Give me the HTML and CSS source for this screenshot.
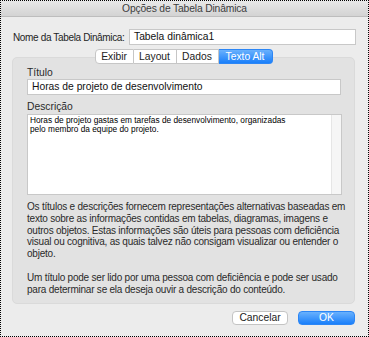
FILE: index.html
```html
<!DOCTYPE html>
<html>
<head>
  <meta http-equiv="Content-type" content="text/html; charset=utf-8">
  <title>Opções de Tabela Dinâmica</title>
  <link rel="stylesheet" href="styles.css">
</head>
<body>
<div class="win">
  <div class="titlebar">Opções de Tabela Dinâmica</div>

  <div class="namerow">
    <label class="namelbl">Nome da Tabela Dinâmica:</label>
    <div class="field namefield">Tabela dinâmica1</div>
  </div>

  <div class="tabs">
    <span class="tab t1">Exibir</span>
    <span class="tab t2">Layout</span>
    <span class="tab t3">Dados</span>
    <span class="tab t4 sel">Texto Alt</span>
  </div>

  <div class="group">
    <div class="lbl">Título</div>
    <div class="field titlefield">Horas de projeto de desenvolvimento</div>

    <div class="lbl lbl2">Descrição</div>
    <div class="area">
      <div class="areatext">Horas de projeto gastas em tarefas de desenvolvimento, organizadas<br>pelo membro da equipe do projeto.</div>
      <div class="scroll"></div>
    </div>

    <p class="info">Os títulos e descrições fornecem representações alternativas baseadas em<br>texto sobre as informações contidas em tabelas, diagramas, imagens e<br>outros objetos. Estas informações são úteis para pessoas com deficiência<br>visual ou cognitiva, as quais talvez não consigam visualizar ou entender o<br>objeto.</p>
    <p class="info info2">Um título pode ser lido por uma pessoa com deficiência e pode ser usado<br>para determinar se ela deseja ouvir a descrição do conteúdo.</p>
  </div>

  <div class="buttons">
    <span class="btn">Cancelar</span>
    <span class="btn ok">OK</span>
  </div>
</div>
</body>
</html>
```

FILE: styles.css
```css
body{margin:0;font:10px "Liberation Sans",Arial,sans-serif;color:#262626;}
.win{width:369px;height:337px;box-sizing:border-box;border:1px dotted #000;background:#ececec;overflow:hidden;}
.titlebar{height:15px;line-height:15px;text-align:center;color:#3e3e3e;font-size:10.3px;letter-spacing:-0.15px;
  background:linear-gradient(#e8e8e8,#d3d3d3);border-bottom:1px solid #bdbdbd;}

.namerow{display:flex;align-items:center;margin:12px 0 0 12px;height:16px;}
.namelbl{width:116px;flex:none;color:#1e1e1e;white-space:nowrap;font-size:10px;letter-spacing:-0.35px;}
.field{background:#fff;border:1px solid #c8c8c8;box-sizing:border-box;height:16px;line-height:14px;padding-left:4px;color:#111;font-size:10.3px;}
.namefield{width:227px;flex:none;}

.tabs{display:flex;justify-content:center;margin:4px 0 0 -2px;height:15px;position:relative;z-index:1;}
.tab{height:15px;box-sizing:border-box;line-height:13px;text-align:center;background:#fff;border:1px solid #c6c6c6;border-left:none;color:#222;font-size:10.3px;}
.t1{width:39px;border-left:1px solid #c6c6c6;border-radius:4px 0 0 4px;}
.t2{width:43px;}
.t3{width:42px;}
.t4{width:54px;border-radius:0 4px 4px 0;}
.tab.sel{background:linear-gradient(#69b1fd,#1a7ffa);border-color:#2c86f5;color:#fff;}

.group{margin:-7px 13px 0 11px;height:247px;box-sizing:border-box;background:#e2e2e2;border:1px solid #dadada;border-radius:5px;padding:6px 14px 0 14px;}
.lbl{margin-top:3px;height:12px;line-height:12px;color:#2a2a2a;font-size:10.3px;}
.lbl2{margin-top:6px;}
.titlefield{width:314px;}
.area{margin-top:1px;width:315px;height:81px;box-sizing:border-box;background:#fff;border:1px solid #c8c8c8;display:flex;}
.areatext{flex:1;font:8.3px Arial,"Liberation Sans",sans-serif;line-height:9px;padding:1px 0 0 2px;color:#000;white-space:nowrap;}
.scroll{width:9px;background:#f6f6f6;border-left:1px solid #e6e6e6;}

.info{margin:6px -10px 0 0;line-height:11.8px;font-size:10px;letter-spacing:-0.22px;color:#2a2a2a;white-space:nowrap;}
.info2{margin-top:12px;}

.buttons{display:flex;justify-content:flex-end;gap:10px;margin:7px 13px 0 0;}
.btn{width:56px;height:14px;box-sizing:border-box;line-height:12px;text-align:center;background:#fff;border:1px solid #c4c4c4;border-radius:4px;color:#222;font-size:10.3px;}
.btn.ok{width:57px;background:linear-gradient(#69b1fd,#1a7ffa);border-color:#2c86f5;color:#fff;}
```
